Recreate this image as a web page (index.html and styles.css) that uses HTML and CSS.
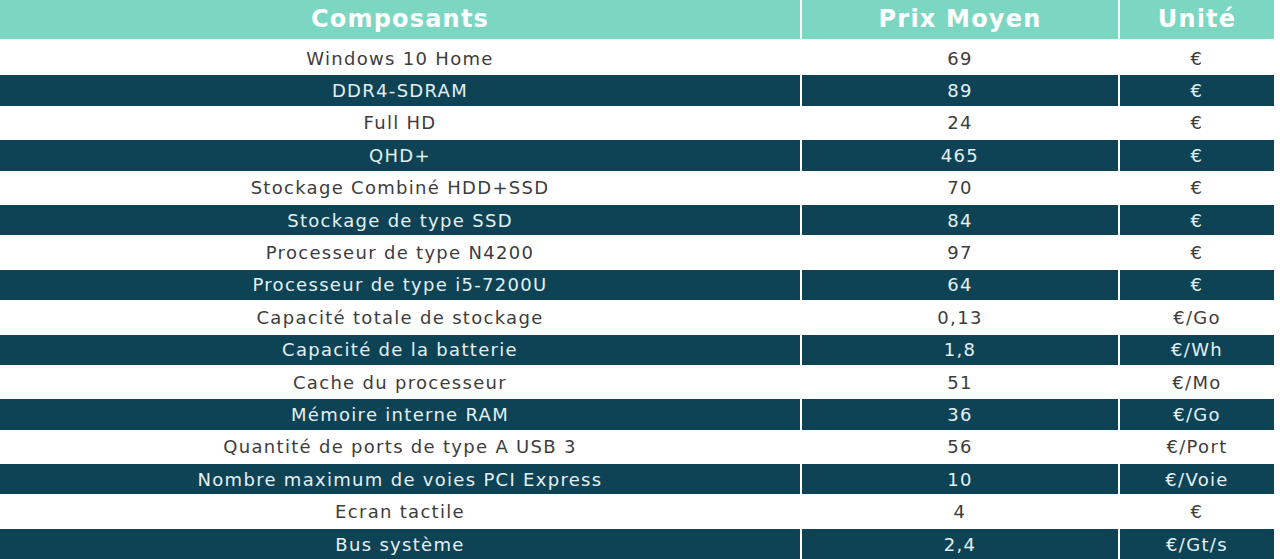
FILE: index.html
```html
<!DOCTYPE html>
<html lang="fr">
<head>
<meta charset="utf-8">
<title>Prix moyen des composants</title>
<link rel="stylesheet" href="styles.css">
</head>
<body>
<table class="prices">
  <colgroup>
    <col class="c-name">
    <col class="c-price">
    <col class="c-unit">
  </colgroup>
  <thead>
    <tr><th>Composants</th><th>Prix Moyen</th><th>Unité</th></tr>
  </thead>
  <tbody>
    <tr><td>Windows 10 Home</td><td>69</td><td>€</td></tr>
    <tr><td>DDR4-SDRAM</td><td>89</td><td>€</td></tr>
    <tr><td>Full HD</td><td>24</td><td>€</td></tr>
    <tr><td>QHD+</td><td>465</td><td>€</td></tr>
    <tr><td>Stockage Combiné HDD+SSD</td><td>70</td><td>€</td></tr>
    <tr><td>Stockage de type SSD</td><td>84</td><td>€</td></tr>
    <tr><td>Processeur de type N4200</td><td>97</td><td>€</td></tr>
    <tr><td>Processeur de type i5-7200U</td><td>64</td><td>€</td></tr>
    <tr><td>Capacité totale de stockage</td><td>0,13</td><td>€/Go</td></tr>
    <tr><td>Capacité de la batterie</td><td>1,8</td><td>€/Wh</td></tr>
    <tr><td>Cache du processeur</td><td>51</td><td>€/Mo</td></tr>
    <tr><td>Mémoire interne RAM</td><td>36</td><td>€/Go</td></tr>
    <tr><td>Quantité de ports de type A USB 3</td><td>56</td><td>€/Port</td></tr>
    <tr><td>Nombre maximum de voies PCI Express</td><td>10</td><td>€/Voie</td></tr>
    <tr><td>Ecran tactile</td><td>4</td><td>€</td></tr>
    <tr><td>Bus système</td><td>2,4</td><td>€/Gt/s</td></tr>
  </tbody>
</table>
</body>
</html>
```

FILE: styles.css
```css
html, body {
  margin: 0;
  padding: 0;
  background: #ffffff;
}

.prices {
  width: 1278px;
  border-collapse: separate;
  border-spacing: 2px 2px;
  margin: -2px 0 0 -2px;
  font-family: "DejaVu Sans", "Open Sans", sans-serif;
  table-layout: fixed;
}

.c-name { width: 800px; }
.c-price { width: 316px; }

.prices th {
  height: 37px;
  padding: 0 0 2px;
  background: #7cd7c2;
  color: #ffffff;
  font-size: 24px;
  letter-spacing: 1.2px;
  font-weight: bold;
  text-align: center;
  vertical-align: middle;
  border-bottom: 2px solid #ffffff;
}

.prices td {
  height: 30.4px;
  padding: 0;
  text-align: center;
  vertical-align: middle;
  font-size: 18px;
  letter-spacing: 1.3px;
  color: #3d3d3d;
  background: #ffffff;
}

.prices tbody tr:nth-child(even) td {
  background: #0e4355;
  color: #e4f0f3;
}
```
